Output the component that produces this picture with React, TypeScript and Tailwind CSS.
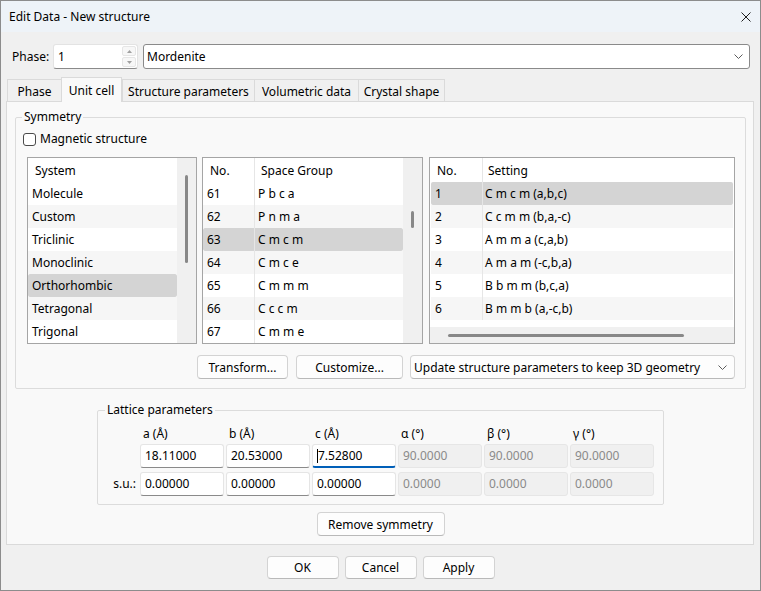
import React from "react";

const systems = ["Molecule", "Custom", "Triclinic", "Monoclinic", "Orthorhombic", "Tetragonal", "Trigonal"];
const groups = [
  ["61", "P b c a"],
  ["62", "P n m a"],
  ["63", "C m c m"],
  ["64", "C m c e"],
  ["65", "C m m m"],
  ["66", "C c c m"],
  ["67", "C m m e"],
];
const settings = [
  ["1", "C m c m (a,b,c)"],
  ["2", "C c m m (b,a,-c)"],
  ["3", "A m m a (c,a,b)"],
  ["4", "A m a m (-c,b,a)"],
  ["5", "B b m m (b,c,a)"],
  ["6", "B m m b (a,-c,b)"],
];
const tabs = [
  { label: "Phase", w: "w-[54px]" },
  { label: "Unit cell", w: "w-[61px]", active: true },
  { label: "Structure parameters", w: "w-[132px]" },
  { label: "Volumetric data", w: "w-[104px]" },
  { label: "Crystal shape", w: "w-[87px]", last: true },
];

function rowBg(i: number, selected: boolean) {
  if (selected) return "bg-[#d4d4d4] rounded-[2px]";
  return i % 2 ? "bg-[#f6f6f6]" : "bg-white";
}

function Chevron() {
  return (
    <svg width="9" height="5" viewBox="0 0 9 5" fill="none">
      <path d="M0.5 0.5L4.5 4.5L8.5 0.5" stroke="#5c5c5c" strokeWidth="1" />
    </svg>
  );
}

function Btn({ label, className }: { label: string; className: string }) {
  return (
    <div
      className={
        "flex items-center justify-center pt-px bg-[#fdfdfd] border border-[#d3d3d3] border-b-[#b9b9b9] rounded-[4px] " +
        className
      }
    >
      {label}
    </div>
  );
}

function Field({ value, kind }: { value: string; kind?: "focus" | "disabled" }) {
  if (kind === "disabled") {
    return (
      <div className="h-[24px] flex items-center pl-[4px] bg-[#f0f0f0] border border-[#e6e6e6] rounded-[3px] text-[#8a8a8a]">
        {value}
      </div>
    );
  }
  if (kind === "focus") {
    return (
      <div className="h-[24px] flex items-center pl-[4px] pt-px bg-white border border-[#e5e5e5] border-b-2 border-b-[#005fb8] rounded-[3px]">
        <span className="w-px h-[14px] bg-black" />
        {value}
      </div>
    );
  }
  return (
    <div className="h-[24px] flex items-center pl-[4px] bg-white border border-[#e5e5e5] border-b-[#8a8a8a] rounded-[3px]">
      {value}
    </div>
  );
}

export default function App() {
  return (
    <div className="w-[761px] h-[591px] overflow-hidden flex flex-col bg-[#f0f0f0] border border-[#8c8c8c] text-[12px] leading-[16px] text-black font-['Noto_Sans',sans-serif]">
      {/* title bar */}
      <div className="h-[31px] shrink-0 bg-[#eef3f8] flex items-center justify-between pl-[8px] pr-[9px]">
        <span>Edit Data - New structure</span>
        <svg width="10" height="10" viewBox="0 0 10 10" fill="none">
          <path d="M0.5 0.5L9.5 9.5M9.5 0.5L0.5 9.5" stroke="#1f1f1f" strokeWidth="1" />
        </svg>
      </div>

      {/* phase row */}
      <div className="flex items-center h-[25px] mt-[12px] pl-[11px] pr-[10px] shrink-0">
        <span className="w-[41px]">Phase:</span>
        <div className="w-[85px] h-full flex bg-white border border-[#e3e3e3] border-b-[#8a8a8a] rounded-[3px]">
          <span className="flex-1 pl-[4px] flex items-center">1</span>
          <div className="w-[15px] flex flex-col py-px pr-px gap-px">
            <div className="flex-1 flex items-center justify-center bg-[#f7f7f7] border border-[#e6e6e6] rounded-[2px]">
              <svg width="5" height="3" viewBox="0 0 5 3">
                <path d="M0 3L2.5 0L5 3Z" fill="#a0a0a0" />
              </svg>
            </div>
            <div className="flex-1 flex items-center justify-center bg-[#f7f7f7] border border-[#e6e6e6] rounded-[2px]">
              <svg width="5" height="3" viewBox="0 0 5 3">
                <path d="M0 0L2.5 3L5 0Z" fill="#a0a0a0" />
              </svg>
            </div>
          </div>
        </div>
        <div className="ml-[5px] flex-1 h-full flex items-center justify-between bg-white border border-[#8a8a8a] rounded-[3px] pl-[3px] pr-[6px]">
          <span>Mordenite</span>
          <Chevron />
        </div>
      </div>

      {/* tabs */}
      <div className="flex items-end h-[24px] mt-[8px] ml-[6px] relative z-10 shrink-0">
        {tabs.map((t) =>
          t.active ? (
            <div
              key={t.label}
              className={"h-[25px] -mb-px flex items-start pt-[5px] justify-center bg-[#f9f9f9] border border-b-0 border-[#dadada] " + t.w}
            >
              {t.label}
            </div>
          ) : (
            <div
              key={t.label}
              className={
                "h-[22px] flex items-center justify-center pt-[2px] border-t border-l border-[#dadada] " +
                (t.last ? "border-r " : "") +
                t.w
              }
            >
              {t.label}
            </div>
          )
        )}
      </div>

      {/* tab panel */}
      <div className="ml-[5px] mr-[6px] h-[444px] shrink-0 border border-[#dadada] bg-[#f9f9f9] pl-[8px] pr-[7px] pt-[7px] flex flex-col">
        <fieldset className="border border-[#dcdcdc] rounded-[2px] pb-[9px]">
          <legend className="ml-[6px] px-[2px]">Symmetry</legend>
          <div className="flex items-center mt-[6px] ml-[7px] h-[16px]">
            <span className="w-[13px] h-[13px] bg-white border border-[#4a4a4a] rounded-[3px]" />
            <span className="ml-[4px]">Magnetic structure</span>
          </div>

          <div className="flex mt-[10px] ml-[11px] h-[187px]">
            {/* system list */}
            <div className="w-[170px] h-full border border-[#a5a5a5] bg-white flex">
              <div className="flex-1 flex flex-col">
                <div className="h-[24px] flex items-center pt-px pl-[7px]">System</div>
                {systems.map((s, i) => (
                  <div key={s} className={"h-[23px] flex items-center pt-px pl-[4px] " + rowBg(i, s === "Orthorhombic")}>
                    {s}
                  </div>
                ))}
              </div>
              <div className="w-[19px] bg-[#f0f0f0] flex justify-center">
                <div className="w-[3px] mt-[17px] h-[88px] rounded-full bg-[#888888]" />
              </div>
            </div>

            {/* space group list */}
            <div className="w-[221px] ml-[5px] h-full border border-[#a5a5a5] bg-white flex">
              <div className="flex-1 flex flex-col">
                <div className="h-[24px] flex">
                  <div className="w-[52px] border-r border-[#e6e6e6] pt-px pl-[7px] flex items-center">No.</div>
                  <div className="flex-1 pl-[6px] pt-px flex items-center">Space Group</div>
                </div>
                {groups.map(([n, g], i) => (
                  <div key={n} className={"h-[23px] flex " + rowBg(i, n === "63")}>
                    <div className="w-[52px] border-r border-[#e6e6e6] pt-px pl-[4px] flex items-center">{n}</div>
                    <div className="flex-1 pl-[3px] pt-px flex items-center">{g}</div>
                  </div>
                ))}
              </div>
              <div className="w-[19px] bg-[#f0f0f0] flex justify-center">
                <div className="w-[3px] mt-[53px] h-[17px] rounded-full bg-[#888888]" />
              </div>
            </div>

            {/* setting list */}
            <div className="w-[306px] ml-[6px] h-full border border-[#a5a5a5] bg-white flex flex-col">
              <div className="h-[24px] flex">
                <div className="w-[53px] border-r border-[#e6e6e6] pt-px pl-[7px] flex items-center">No.</div>
                <div className="flex-1 pl-[5px] pt-px flex items-center">Setting</div>
              </div>
              {settings.map(([n, s], i) => (
                <div key={n} className={"h-[23px] flex mx-px " + rowBg(i, n === "1")}>
                  <div className="w-[52px] border-r border-[#e6e6e6] pt-px pl-[4px] flex items-center">{n}</div>
                  <div className="flex-1 pl-[2px] pt-px flex items-center">{s}</div>
                </div>
              ))}
              <div className="flex-1" />
              <div className="h-[16px] bg-[#f0f0f0] flex items-start">
                <div className="h-[3px] mt-[7px] ml-[18px] w-[236px] rounded-full bg-[#888888]" />
              </div>
            </div>
          </div>

          <div className="flex justify-end items-center mt-[11px] h-[24px] pr-[10px]">
            <Btn label="Transform..." className="w-[91px] h-full" />
            <Btn label="Customize..." className="w-[107px] h-full ml-[8px]" />
            <div className="w-[325px] h-full ml-[7px] flex items-center justify-between pt-px bg-[#fdfdfd] border border-[#d3d3d3] border-b-[#b9b9b9] rounded-[4px] pl-[3px] pr-[7px]">
              <span>Update structure parameters to keep 3D geometry</span>
              <Chevron />
            </div>
          </div>
        </fieldset>

        <fieldset className="self-center w-[567px] mt-[13px] border border-[#dcdcdc] rounded-[2px] pb-[8px]">
          <legend className="ml-[7px] px-[2px]">Lattice parameters</legend>
          <div className="grid grid-cols-[40px_repeat(6,84px)] gap-x-[2px] mt-[8px] h-[16px]">
            <div />
            <div className="pl-[3px]">a (Å)</div>
            <div className="pl-[3px]">b (Å)</div>
            <div className="pl-[3px]">c (Å)</div>
            <div className="pl-[3px]">α (°)</div>
            <div className="pl-[3px]">β (°)</div>
            <div className="pl-[3px]">γ (°)</div>
          </div>
          <div className="grid grid-cols-[40px_repeat(6,84px)] gap-x-[2px] mt-[2px]">
            <div />
            <Field value="18.11000" />
            <Field value="20.53000" />
            <Field value="7.52800" kind="focus" />
            <Field value="90.0000" kind="disabled" />
            <Field value="90.0000" kind="disabled" />
            <Field value="90.0000" kind="disabled" />
          </div>
          <div className="grid grid-cols-[40px_repeat(6,84px)] gap-x-[2px] mt-[4px]">
            <div className="flex items-center justify-end pr-[2px]">s.u.:</div>
            <Field value="0.00000" />
            <Field value="0.00000" />
            <Field value="0.00000" />
            <Field value="0.0000" kind="disabled" />
            <Field value="0.0000" kind="disabled" />
            <Field value="0.0000" kind="disabled" />
          </div>
        </fieldset>

        <Btn label="Remove symmetry" className="self-center w-[128px] h-[24px] mt-[7px]" />
      </div>

      {/* dialog buttons */}
      <div className="flex justify-center gap-[6px] mt-[11px] h-[23px] shrink-0">
        <Btn label="OK" className="w-[72px] h-full" />
        <Btn label="Cancel" className="w-[72px] h-full" />
        <Btn label="Apply" className="w-[72px] h-full" />
      </div>
    </div>
  );
}
